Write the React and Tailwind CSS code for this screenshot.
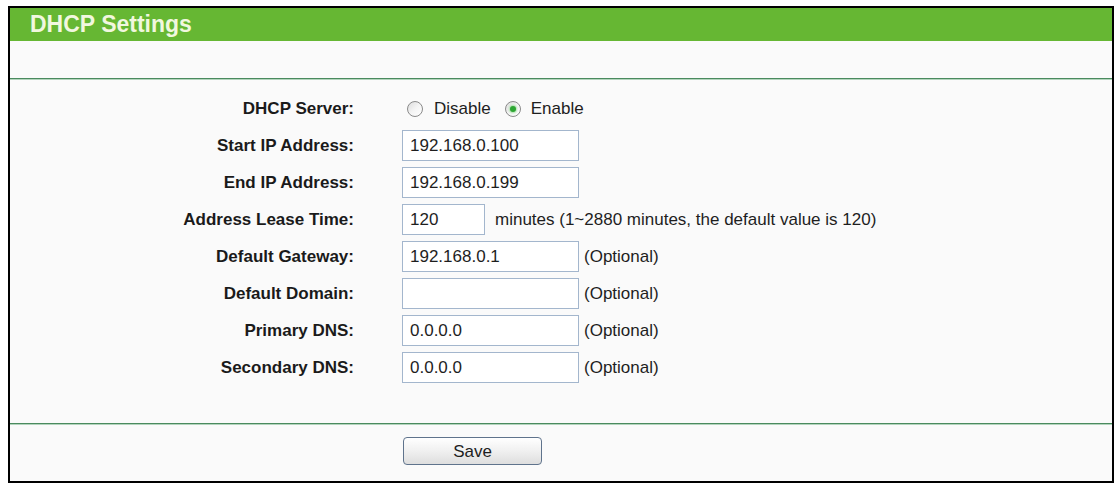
import React from "react";

const font = { fontFamily: '"Liberation Sans", Arial, sans-serif' };

function Radio({ checked }) {
  return (
    <span className="flex items-center justify-center w-[16px] h-[16px] rounded-full border border-[#8a8a8a] bg-gradient-to-br from-[#dcdcdc] via-[#f4f4f4] to-[#ffffff] shrink-0">
      {checked && (
        <span className="block w-[6px] h-[6px] rounded-full bg-[#2da532] shadow-[0_0_2px_1px_#a8e0a8]" />
      )}
    </span>
  );
}

function Field({ value, w = "w-[177px]" }) {
  return (
    <div className={`${w} h-[31px] border border-[#a3b6cd] bg-white flex items-center pl-[7px] text-[17px] text-[#1e1e1e]`}>
      {value}
    </div>
  );
}

function Row({ label, children }) {
  return (
    <div className="flex items-center h-[37px]">
      <div className="w-[344px] text-right font-bold text-[17px] text-[#1a1a1a]">{label}</div>
      <div className="ml-[48px] flex items-center text-[17px] text-[#1e1e1e]">{children}</div>
    </div>
  );
}

function Optional() {
  return <span className="ml-[5px]">(Optional)</span>;
}

export default function App() {
  return (
    <div className="w-[1118px] h-[487px] bg-white pt-[6px] pl-[8px]" style={font}>
      <div className="w-[1106px] h-[477px] border-2 border-black bg-[#fafafa] flex flex-col">
        <div className="h-[33px] bg-[#66b733] pl-[20px] text-[23px] leading-[33px] font-bold text-[#f1f7df]">
          DHCP Settings
        </div>
        <div className="h-[37px]" />
        <div className="h-[2px] bg-[#4a8a5e] border-b border-[#b3d4bd]" />
        <div className="pt-[10px] h-[343px]">
          <Row label="DHCP Server:">
            <span className="ml-[5px] flex items-center">
              <Radio />
              <span className="ml-[11px]">Disable</span>
              <span className="ml-[14px]"><Radio checked /></span>
              <span className="ml-[10px]">Enable</span>
            </span>
          </Row>
          <Row label="Start IP Address:">
            <Field value="192.168.0.100" />
          </Row>
          <Row label="End IP Address:">
            <Field value="192.168.0.199" />
          </Row>
          <Row label="Address Lease Time:">
            <Field value="120" w="w-[83px]" />
            <span className="ml-[10px]">minutes (1~2880 minutes, the default value is 120)</span>
          </Row>
          <Row label="Default Gateway:">
            <Field value="192.168.0.1" />
            <Optional />
          </Row>
          <Row label="Default Domain:">
            <Field value="" />
            <Optional />
          </Row>
          <Row label="Primary DNS:">
            <Field value="0.0.0.0" />
            <Optional />
          </Row>
          <Row label="Secondary DNS:">
            <Field value="0.0.0.0" />
            <Optional />
          </Row>
        </div>
        <div className="h-[2px] bg-[#4a8a5e] border-b border-[#b3d4bd]" />
        <div className="flex-1 pt-[12px] pl-[393px]">
          <button className="w-[139px] h-[28px] rounded-[4px] border border-[#5f738c] bg-gradient-to-b from-[#ffffff] via-[#f0f0f0] to-[#dedede] text-[17px] text-[#1e1e1e] leading-none" style={font}>
            Save
          </button>
        </div>
      </div>
    </div>
  );
}
